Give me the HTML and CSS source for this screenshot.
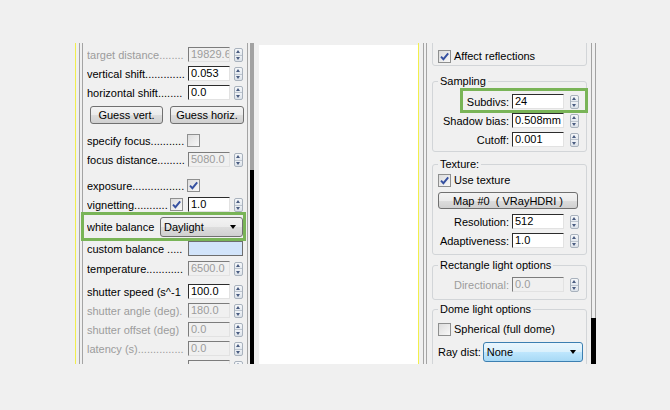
FILE: index.html
```html
<!DOCTYPE html>
<html>
<head>
<meta charset="utf-8">
<link rel="stylesheet" href="styles.css">
</head>
<body>
<div class="frame">
  <div class="edge"><div class="yl"></div><div class="gap3"></div><div class="dbl"></div></div>
  <div class="left">
    <div class="row dis"><span class="lbl">target distance........</span><span class="ed">19829.6</span><span class="spin"></span></div>
    <div class="row"><span class="lbl">vertical shift.............</span><span class="ed on">0.053</span><span class="spin"></span></div>
    <div class="row"><span class="lbl">horizontal shift........</span><span class="ed on">0.0</span><span class="spin"></span></div>
    <div class="btns"><span class="btn gv">Guess vert.</span><span class="btn gh">Guess horiz.</span></div>
    <div class="row mt7"><span class="lbl">specify focus...........</span><span class="cb"></span></div>
    <div class="row"><span class="lbl">focus distance.........</span><span class="ed">5080.0</span><span class="spin"></span></div>
    <div class="row mt7"><span class="lbl">exposure.................</span><span class="cb"><svg viewBox="0 0 11 11" width="11" height="11"><path d="M2 5.6 L4.4 8.2 L9.2 2.4" fill="none" stroke="#3550a0" stroke-width="1.9"/></svg></span></div>
    <div class="row"><span class="lbl lv">vignetting...........</span><span class="cb"><svg viewBox="0 0 11 11" width="11" height="11"><path d="M2 5.6 L4.4 8.2 L9.2 2.4" fill="none" stroke="#3550a0" stroke-width="1.9"/></svg></span><span class="ed on ml5">1.0</span><span class="spin"></span></div>
    <div class="row wb hl"><span class="lbl lw">white balance</span><span class="dd">Daylight<span class="arr"></span></span></div>
    <div class="row mt2"><span class="lbl">custom balance .....</span><span class="sw"></span></div>
    <div class="row mt1"><span class="lbl">temperature............</span><span class="ed">6500.0</span><span class="spin"></span></div>
    <div class="row mt4"><span class="lbl">shutter speed (s^-1</span><span class="ed on">100.0</span><span class="spin"></span></div>
    <div class="row dis"><span class="lbl">shutter angle (deg).</span><span class="ed">180.0</span><span class="spin"></span></div>
    <div class="row dis"><span class="lbl">shutter offset (deg)</span><span class="ed">0.0</span><span class="spin"></span></div>
    <div class="row dis"><span class="lbl">latency (s)...............</span><span class="ed">0.0</span><span class="spin"></span></div>
    <div class="row dis"><span class="lbl"></span><span class="ed"></span><span class="spin"></span></div>
  </div>
  <div class="lscroll"><div class="trk"></div><div class="thm"></div></div>
  <div class="view"></div>
  <div class="edge"><div class="yl"></div><div class="gap4"></div><div class="dbl"></div></div>
  <div class="right">
    <div class="grp g1">
      <div class="crow"><span class="cb"><svg viewBox="0 0 11 11" width="11" height="11"><path d="M2 5.6 L4.4 8.2 L9.2 2.4" fill="none" stroke="#3550a0" stroke-width="1.9"/></svg></span>Affect reflections</div>
    </div>
    <fieldset class="grp fs-s">
      <legend>Sampling</legend>
      <div class="rrow hl2"><span class="rl">Subdivs:</span><span class="ed on">24</span><span class="spin"></span></div>
      <div class="rrow"><span class="rl">Shadow bias:</span><span class="ed on">0.508mm</span><span class="spin"></span></div>
      <div class="rrow"><span class="rl">Cutoff:</span><span class="ed on">0.001</span><span class="spin"></span></div>
    </fieldset>
    <fieldset class="grp fs-t">
      <legend>Texture:</legend>
      <div class="crow"><span class="cb"><svg viewBox="0 0 11 11" width="11" height="11"><path d="M2 5.6 L4.4 8.2 L9.2 2.4" fill="none" stroke="#3550a0" stroke-width="1.9"/></svg></span>Use texture</div>
      <div class="btn mapbtn">Map #0&nbsp;&nbsp;( VRayHDRI )</div>
      <div class="rrow mt3"><span class="rl">Resolution:</span><span class="ed on">512</span><span class="spin"></span></div>
      <div class="rrow"><span class="rl">Adaptiveness:</span><span class="ed on">1.0</span><span class="spin"></span></div>
    </fieldset>
    <fieldset class="grp fs-r">
      <legend>Rectangle light options</legend>
      <div class="rrow dis"><span class="rl">Directional:</span><span class="ed">0.0</span><span class="spin"></span></div>
    </fieldset>
    <fieldset class="grp fs-d">
      <legend>Dome light options</legend>
      <div class="crow"><span class="cb"></span>Spherical (full dome)</div>
      <div class="drow"><span>Ray dist:</span><span class="dd hot">None<span class="arr"></span></span></div>
    </fieldset>
  </div>
  <div class="rscroll"><div class="trk"></div><div class="thm"></div></div>
</div>
</body>
</html>
```

FILE: styles.css
```css
* { box-sizing: border-box; }
html, body { margin: 0; padding: 0; }
body {
  background: #f0f0f0;
  font-family: "Liberation Sans", Arial, sans-serif;
  font-size: 11px;
  color: #000;
  width: 670px;
  height: 410px;
  overflow: hidden;
}
.frame {
  display: flex;
  margin: 43px 0 0 75px;
  width: 521px;
  height: 321px;
  overflow: hidden;
}
.edge { display: flex; flex: none; }
.yl { width: 1px; background: #f2ef4c; }
.gap3 { width: 3px; }
.gap4 { width: 4px; }
.dbl { width: 4px; border-left: 1px solid #a4a4a4; border-right: 1px solid #a4a4a4; }

/* left rollout */
.left {
  flex: none;
  width: 165px;
  padding: 2px 0 0 4px;
  border-right: 1px solid #a4a4a4;
}
.row {
  display: flex;
  align-items: center;
  height: 19px;
  white-space: nowrap;
}
.lbl { flex: none; width: 100px; overflow: hidden; text-overflow: clip; }
.lv { width: 83px; }
.lw { width: 73px; }
.dis .lbl, .dis .rl { color: #9c9c9c; }
.mt1 { margin-top: 1px; }
.mt2 { margin-top: 2px; }
.mt3 { margin-top: 3px; }
.mt4 { margin-top: 4px; }
.mt7 { margin-top: 7px; }
.ml5 { margin-left: 5px !important; }

.ed {
  flex: none;
  display: block;
  width: 42px;
  height: 15px;
  margin-left: 1px;
  padding: 0 2px;
  line-height: 13px;
  overflow: hidden;
  white-space: nowrap;
  color: #9c9c9c;
  border-top: 1px solid #7c7c7c;
  border-left: 1px solid #7c7c7c;
  border-right: 1px solid #e2e2e2;
  border-bottom: 1px solid #e2e2e2;
}
.ed.on {
  color: #000;
  background: #fff;
  border-top-color: #2c2c2c;
  border-left-color: #2c2c2c;
}
.spin {
  flex: none;
  position: relative;
  width: 9px;
  height: 14px;
  margin-left: 4px;
  border: 1px solid #a9b2bd;
  border-radius: 2px;
  background: linear-gradient(#f6f8fa 0, #e4e9ef 5.5px, #bcc4ce 5.5px, #bcc4ce 6.5px, #eef1f5 6.5px, #dce2e9 100%);
}
.spin::before, .spin::after {
  content: "";
  position: absolute;
  left: 1px;
  border-left: 2.5px solid transparent;
  border-right: 2.5px solid transparent;
}
.spin::before { top: 1px; border-bottom: 3px solid #4a5c80; }
.spin::after { bottom: 1px; border-top: 3px solid #4a5c80; }

.cb {
  flex: none;
  display: block;
  width: 13px;
  height: 13px;
  border: 1px solid #8e8f8f;
  background: linear-gradient(135deg, #dcdcdc, #f8f8f8);
}
.cb svg { display: block; }

.btns { display: flex; height: 18px; margin-top: 4px; }
.btn {
  display: flex;
  align-items: center;
  justify-content: center;
  white-space: nowrap;
  border: 1px solid #707070;
  border-radius: 3px;
  background: linear-gradient(#f3f3f3 0%, #ebebeb 50%, #dddddd 51%, #d0d0d0 100%);
}
.gv { width: 73px; margin-left: 3px; }
.gh { width: 74px; margin-left: 7px; }

.wb { height: 20px; margin-top: 3px; }
.dd {
  flex: none;
  position: relative;
  display: flex;
  align-items: center;
  width: 83px;
  height: 20px;
  padding-left: 3px;
  border: 1px solid #707070;
  border-radius: 3px;
  background: linear-gradient(#f3f3f3 0%, #ebebeb 50%, #dddddd 51%, #d0d0d0 100%);
}
.arr {
  position: absolute;
  right: 6px;
  top: 7px;
  border-left: 3.5px solid transparent;
  border-right: 3.5px solid transparent;
  border-top: 4px solid #000;
}
.dd.hot {
  width: 100px;
  margin-left: 2px;
  border-color: #3c7fb1;
  background: linear-gradient(#eaf6fd 0%, #d9f0fc 50%, #bee6fd 51%, #a7d9f5 100%);
}
.hl, .hl2 { position: relative; }
.hl::after, .hl2::after {
  content: "";
  position: absolute;
  border: 3px solid #79b457;
  pointer-events: none;
}
.hl::after { top: -5px; bottom: -4px; left: -6px; right: 1px; }
.hl2::after { top: -4px; bottom: -2px; left: 27px; right: -2px; }

.sw {
  flex: none;
  width: 55px;
  height: 15px;
  margin-left: 1px;
  background: #d2e4fa;
  border: 1px solid #6e6e6e;
}

.lscroll {
  flex: none;
  width: 4px;
  margin: 0 5px 0 2px;
  display: flex;
  flex-direction: column;
}
.lscroll .trk { height: 127px; background: #a2a2a2; }
.lscroll .thm { flex: 1; background: #000; }

.view { flex: none; width: 159px; margin-top: 2px; background: #fff; }

/* right rollout */
.right { flex: none; width: 164px; }
fieldset { margin: 0; padding: 0; min-width: 0; }
.grp {
  margin-left: 5px;
  width: 155px;
  border: 1px solid #d2d5d8;
  border-radius: 3px;
}
legend {
  padding: 0 2px;
  margin-left: 5px;
  line-height: 14px;
  font-size: 11px;
  white-space: nowrap;
}
.g1 { margin-top: -10px; padding-top: 13px; height: 33px; }
.fs-s { margin-top: 8px; padding: 4px 0 2px; }
.fs-t { margin-top: 5px; padding: 0 0 4px; }
.fs-r { margin-top: 3px; padding: 3px 0 5px; }
.fs-d { margin-top: 2px; padding: 4px 0 10px; }

.crow {
  display: flex;
  align-items: center;
  height: 18px;
  padding-left: 5px;
  white-space: nowrap;
}
.crow .cb { margin-right: 3px; }
.rrow {
  display: flex;
  align-items: center;
  height: 19px;
  white-space: nowrap;
}
.rl { flex: none; width: 76px; text-align: right; }
.rrow .ed { width: 52px; margin-left: 3px; }
.rrow .spin { margin-left: 6px; }
.mapbtn { width: 140px; height: 17px; margin: 3px 0 0 5px; }
.drow {
  display: flex;
  align-items: center;
  height: 20px;
  margin-top: 4px;
  padding-left: 5px;
  white-space: nowrap;
}

.rscroll {
  flex: none;
  width: 5px;
  display: flex;
  flex-direction: column;
}
.rscroll .trk { height: 275px; border-left: 1px solid #a2a2a2; border-right: 1px solid #a2a2a2; }
.rscroll .thm { flex: 1; background: #000; }
```
